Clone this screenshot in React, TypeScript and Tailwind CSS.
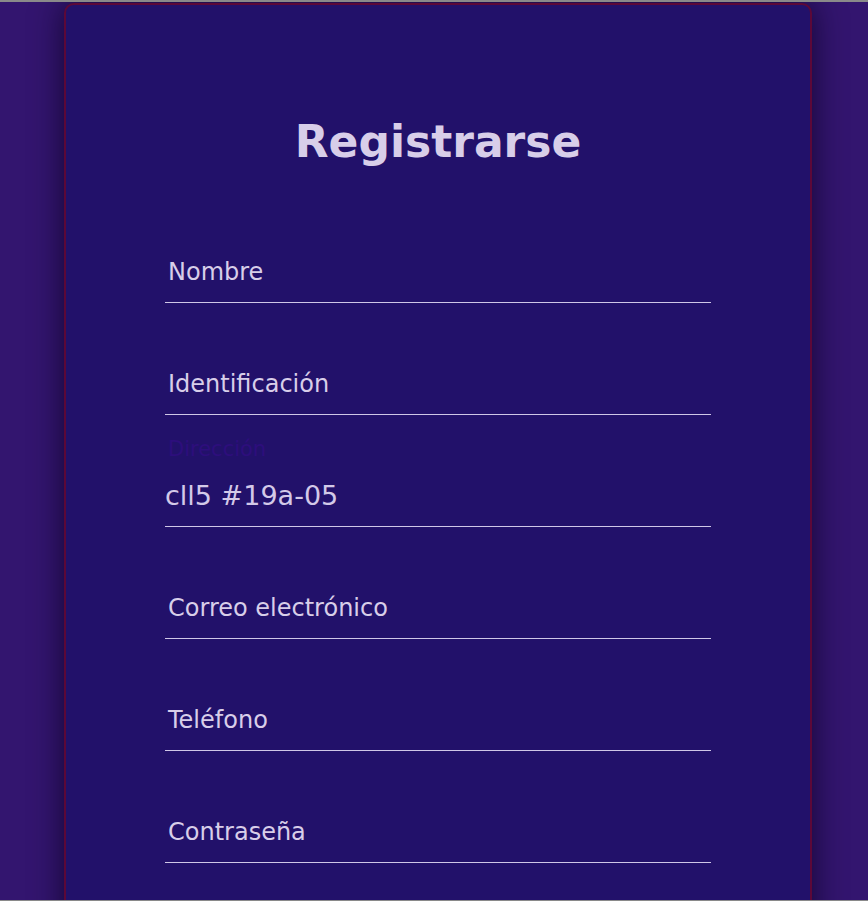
export default function App() {
  const fields = [
    { label: 'Nombre', value: '' },
    { label: 'Identificación', value: '' },
    { label: 'Dirección', value: 'cll5 #19a-05' },
    { label: 'Correo electrónico', value: '' },
    { label: 'Teléfono', value: '' },
    { label: 'Contraseña', value: '' },
  ];

  return (
    <div className="h-[901px] overflow-hidden border-t-2 border-b border-[#8a8a8a] bg-[#33156f]" style={{ fontFamily: '"DejaVu Sans", Verdana, sans-serif' }}>
      <div className="ml-[64px] mt-[1px] w-[748px] h-[940px] rounded-[10px] border-2 border-[#5c0838] bg-[#22116a] shadow-[0_0_32px_rgba(10,0,30,0.75)] px-[99px]">
        <h1 className="pt-[110px] h-[186px] text-center text-[44px] leading-[53px] font-bold text-[#d8cee9]">
          Registrarse
        </h1>
        <div className="flex flex-col">
          {fields.map((field) => (
            <div key={field.label} className="relative h-[112px] flex items-end">
              {field.value ? (
                <>
                  <label className="absolute left-[3px] bottom-[62px] text-[21px] leading-[32px] text-[#2d0e7c]">{field.label}</label>
                  <input
                    defaultValue={field.value}
                    readOnly
                    className="w-full h-[60px] pb-[3px] bg-transparent border-b border-[#cfc7e7] text-[27px] text-[#d3c9e8] outline-none"
                  />
                </>
              ) : (
                <>
                  <label className="absolute left-[3px] bottom-[13px] text-[24px] leading-[36px] text-[#d8cee9]">{field.label}</label>
                  <input className="w-full h-[60px] bg-transparent border-b border-[#cfc7e7] outline-none" />
                </>
              )}
            </div>
          ))}
        </div>
      </div>
    </div>
  );
}
